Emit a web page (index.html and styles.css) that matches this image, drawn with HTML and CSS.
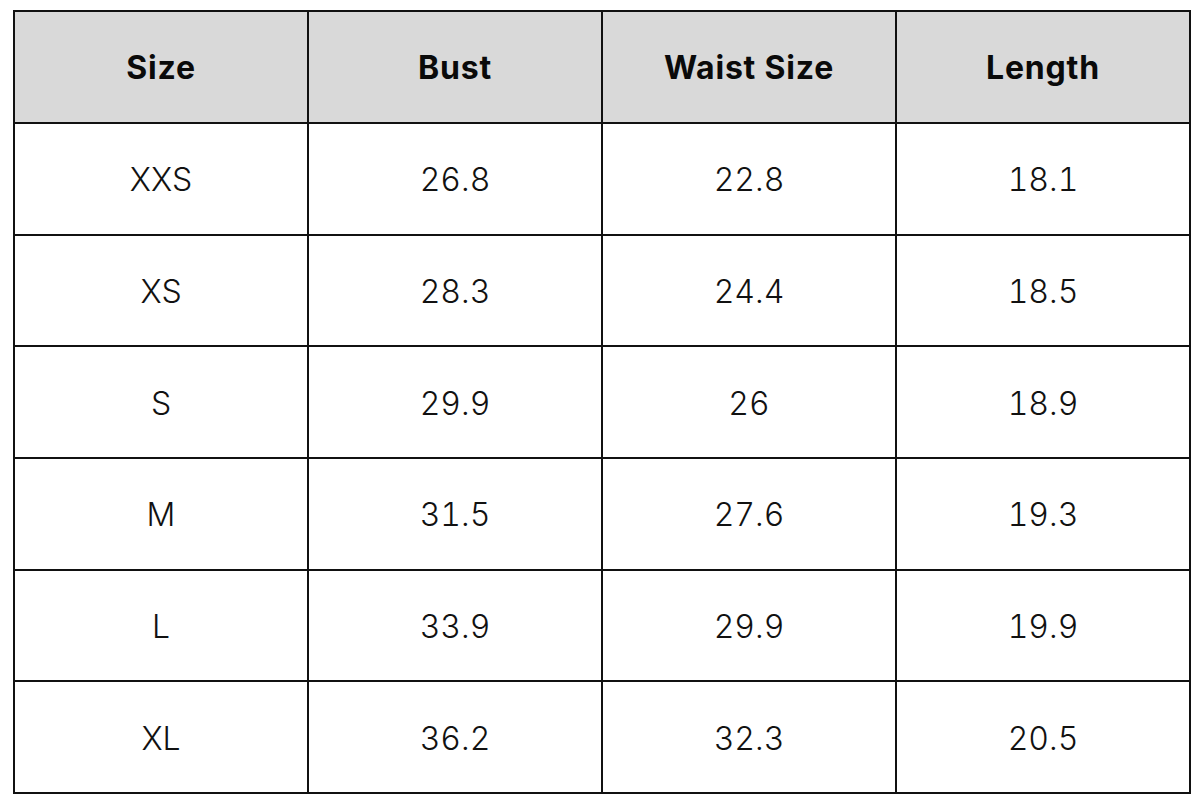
FILE: index.html
```html
<!DOCTYPE html>
<html>
<head>
<meta charset="utf-8">
<link rel="stylesheet" href="styles.css">
</head>
<body>
<div class="chart">
  <div class="cell head">Size</div>
  <div class="cell head">Bust</div>
  <div class="cell head">Waist Size</div>
  <div class="cell head">Length</div>

  <div class="cell">XXS</div><div class="cell">26.8</div><div class="cell">22.8</div><div class="cell">18.1</div>
  <div class="cell">XS</div><div class="cell">28.3</div><div class="cell">24.4</div><div class="cell">18.5</div>
  <div class="cell">S</div><div class="cell">29.9</div><div class="cell">26</div><div class="cell">18.9</div>
  <div class="cell">M</div><div class="cell">31.5</div><div class="cell">27.6</div><div class="cell">19.3</div>
  <div class="cell">L</div><div class="cell">33.9</div><div class="cell">29.9</div><div class="cell">19.9</div>
  <div class="cell">XL</div><div class="cell">36.2</div><div class="cell">32.3</div><div class="cell">20.5</div>
</div>
</body>
</html>
```

FILE: styles.css
```css
html, body {
  margin: 0;
  padding: 0;
  background: #ffffff;
}
body {
  padding: 10px 0 0 13px;
  font-family: Inter, "Open Sans", "Liberation Sans", sans-serif;
  color: #000;
}
.chart {
  display: grid;
  grid-template-columns: repeat(4, 294px);
  grid-template-rows: 112px repeat(6, 111.67px);
  width: max-content;
  border-left: 2px solid #111;
  border-top: 2px solid #111;
}
.cell {
  display: flex;
  align-items: center;
  justify-content: center;
  border-right: 2px solid #111;
  border-bottom: 2px solid #111;
  font-size: 32px;
  font-weight: 350;
  font-feature-settings: "tnum" 1;
  padding-top: 2px;
  color: #111;
}
.head {
  background: #d9d9d9;
  font-weight: 700;
  font-size: 32px;
  letter-spacing: 0.8px;
  font-feature-settings: normal;
  padding-top: 0;
  color: #0a0a0a;
}
```
